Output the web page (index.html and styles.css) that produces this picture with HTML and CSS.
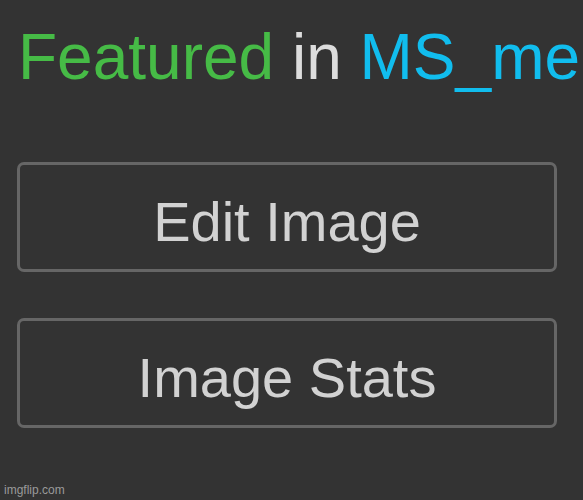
FILE: index.html
```html
<!DOCTYPE html>
<html lang="en">
<head>
  <meta charset="UTF-8" />
  <title>Featured in MS_memer_group</title>
  <link rel="stylesheet" href="styles.css">
</head>
<body>

  <h1 class="featured">
    <span class="word-featured">Featured</span>
    <span class="word-in">in</span>
    <span class="word-stream">MS_memer_group</span>
  </h1>

  <div class="actions">
    <button class="btn-action">Edit Image</button>
    <button class="btn-action">Image Stats</button>
  </div>

  <div class="watermark">imgflip.com</div>

</body>
</html>
```

FILE: styles.css
```css
html, body {
  height: 100%;
}

body {
  margin: 0;
  background: #333333;
  font-family: "Liberation Sans", Arial, sans-serif;
  position: relative;
  overflow: hidden;
}

.featured {
  margin: 0;
  padding: 20px 0 0 18px;
  font-size: 64px;
  font-weight: normal;
  line-height: 74px;
  white-space: nowrap;
}

.word-featured {
  color: #46bb46;
}

.word-in {
  color: #dddddd;
}

.word-stream {
  color: #11bdee;
}

.actions {
  display: flex;
  flex-direction: column;
  gap: 46px;
  margin: 68px 26px 0 17px;
}

.btn-action {
  height: 110px;
  padding: 9px 0 0 0;
  background: transparent;
  border: 3px solid #666666;
  border-radius: 7px;
  color: #d2d2d2;
  font-family: "Liberation Sans", Arial, sans-serif;
  font-size: 56px;
  cursor: pointer;
}

.watermark {
  position: absolute;
  left: 4px;
  bottom: 3px;
  font-size: 12px;
  color: #9a9a9a;
}
```
